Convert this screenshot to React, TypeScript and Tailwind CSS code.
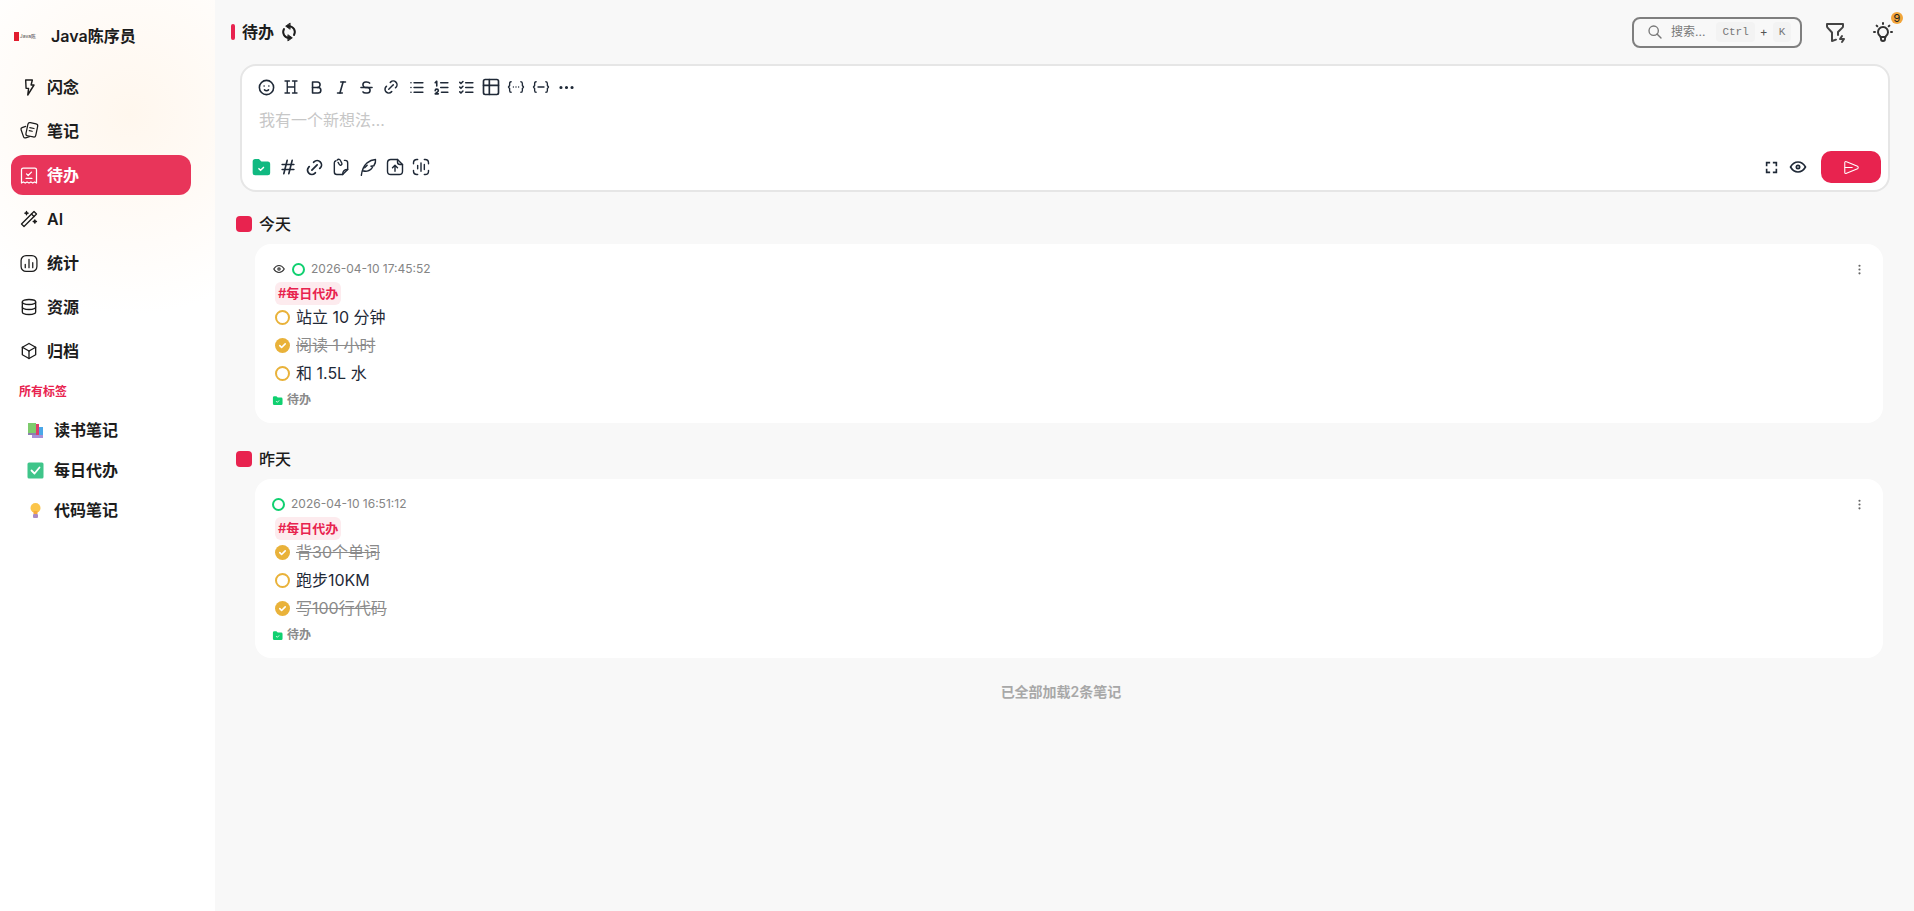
import type { ReactNode } from "react";
import {
  TbBold,
  TbBox,
  TbBulb,
  TbDatabase,
  TbDots,
  TbDotsVertical,
  TbEye,
  TbFilterBolt,
  TbHash,
  TbItalic,
  TbLink,
  TbList,
  TbListCheck,
  TbListNumbers,
  TbMoodSmile,
  TbSearch,
  TbStrikethrough,
  TbTable,
  TbWand,
} from "react-icons/tb";

const font = "font-['Inter','Noto_Sans_CJK_SC',sans-serif]";

const BoltIcon = () => (
  <svg width="21" height="21" viewBox="0 0 24 24" fill="none" stroke="currentColor" strokeWidth="1.700" strokeLinejoin="round" strokeLinecap="round">
    <path d="M8 3h8l-1.500 6H18l-7.500 12 1-8H8.500L8 3z" />
  </svg>
);

const NotesIcon = () => (
  <svg width="22" height="22" viewBox="0 0 24 24" fill="none" stroke="currentColor" strokeWidth="1.500" strokeLinejoin="round" strokeLinecap="round">
    <rect x="9.500" y="2.500" width="12" height="16" rx="2.500" transform="rotate(12 15 10)" />
    <path d="M13 8l5 1M12.300 11.500l3.500.8" />
    <path d="M8 6.500L3.700 8a2 2 0 0 0-1.200 2.500l3 8.500A2 2 0 0 0 8 20.200l4.500-1.400" />
  </svg>
);

const TodoIcon = () => (
  <svg width="21" height="21" viewBox="0 0 24 24" fill="none" stroke="currentColor" strokeWidth="1.500" strokeLinejoin="round" strokeLinecap="round">
    <path d="M5 3h14a2 2 0 0 1 2 2v16l-2.200-1.200-2.300 1.200-2.200-1.200-2.300 1.200-2.300-1.200L7.500 21l-2.300-1.200L3 21V5a2 2 0 0 1 2-2z" />
    <path d="M9 10l2 2 4-4M8.500 15.500h7" />
  </svg>
);

const ChartIcon = () => (
  <svg width="21" height="21" viewBox="0 0 24 24" fill="none" stroke="currentColor" strokeWidth="1.500" strokeLinecap="round">
    <rect x="2.500" y="2.500" width="19" height="19" rx="6" />
    <path d="M7.500 13v4M12 7v10M16.500 11v6" />
  </svg>
);

const SyncIcon = () => (
  <svg width="20" height="20" viewBox="0 0 24 24" fill="none" stroke="currentColor" strokeWidth="2.400" strokeLinecap="round" strokeLinejoin="round">
    <path d="M12 5a7 7 0 0 1 6 10.500" />
    <path d="M12 19a7 7 0 0 1-6-10.500" />
    <path d="M13 1.500L8 5l5 3.500z" fill="currentColor" strokeWidth="1" />
    <path d="M11 15.500l5 3.500-5 3.500z" fill="currentColor" strokeWidth="1" />
  </svg>
);

const HeadingIcon = () => (
  <svg width="18" height="18" viewBox="0 0 24 24" fill="none" stroke="currentColor" strokeWidth="1.800" strokeLinecap="round">
    <path d="M7 4v16M17 4v16M7 12h10M4 4h6M14 4h6M4 20h6M14 20h6" />
  </svg>
);

const BraceDotsIcon = () => (
  <svg width="18" height="18" viewBox="0 0 24 24" fill="none" stroke="currentColor" strokeWidth="1.800" strokeLinecap="round" strokeLinejoin="round">
    <path d="M5.500 5C4 5 3.500 6 3.500 7.500v2.500L2 12l1.500 2v2.500C3.500 18 4 19 5.500 19" />
    <path d="M18.500 5C20 5 20.500 6 20.500 7.500v2.500L22 12l-1.500 2v2.500C20.500 18 20 19 18.500 19" />
    <path d="M8.500 12h.01M12 12h.01M15.500 12h.01" />
  </svg>
);

const BraceDashIcon = () => (
  <svg width="18" height="18" viewBox="0 0 24 24" fill="none" stroke="currentColor" strokeWidth="1.800" strokeLinecap="round" strokeLinejoin="round">
    <path d="M5.500 5C4 5 3.500 6 3.500 7.500v2.500L2 12l1.500 2v2.500C3.500 18 4 19 5.500 19" />
    <path d="M18.500 5C20 5 20.500 6 20.500 7.500v2.500L22 12l-1.500 2v2.500C20.500 18 20 19 18.500 19" />
    <path d="M8 12h8" />
  </svg>
);

const FolderCheck = ({ size, color }: { size: number; color: string }) => (
  <svg width={size} height={size} viewBox="0 0 24 24">
    <path d="M2 5.500A3 3 0 0 1 5 2.500h4.500l3 3H20a3 3 0 0 1 3 3V19a3 3 0 0 1-3 3H5a3 3 0 0 1-3-3z" fill={color} />
    <path d="M9.500 14l2 2 3.500-3.500" fill="none" stroke="#fff" strokeWidth="1.800" strokeLinecap="round" strokeLinejoin="round" />
  </svg>
);

const ClipNoteIcon = () => (
  <svg width="20" height="20" viewBox="0 0 24 24" fill="none" stroke="currentColor" strokeWidth="1.700" strokeLinecap="round" strokeLinejoin="round">
    <path d="M6 4.500A2.500 2.500 0 0 0 4 7v11a3 3 0 0 0 3 3h7l6-6V7a3 3 0 0 0-3-3h-1" />
    <path d="M14 21c0-3 1-6 6-6" />
    <path d="M7.500 3.500c1.500-1.500 3.500-.5 4 1l1.500 3c.8 2-2 3.200-3 1.500L8.500 6.500" />
  </svg>
);

const FeatherIcon = () => (
  <svg width="20" height="20" viewBox="0 0 24 24" fill="none" stroke="currentColor" strokeWidth="1.700" strokeLinecap="round" strokeLinejoin="round">
    <path d="M4 22c.8-6 3-11.500 7-15 3-2.500 6-3.700 10-4 .5 3-.5 5.500-2 7.500l-3.500.5 2 1c-1.200 2.500-3.500 4.500-6.500 5-2 .3-3.700 0-5-.5" />
    <path d="M8 13l3-3" />
  </svg>
);

const UploadFileIcon = () => (
  <svg width="20" height="20" viewBox="0 0 24 24" fill="none" stroke="currentColor" strokeWidth="1.700" strokeLinecap="round" strokeLinejoin="round">
    <path d="M15 3H7a4 4 0 0 0-4 4v10a4 4 0 0 0 4 4h10a4 4 0 0 0 4-4V9z" />
    <path d="M15 3v3a3 3 0 0 0 3 3h3" />
    <path d="M12 17v-7M9 13l3-3 3 3" />
  </svg>
);

const VoiceIcon = () => (
  <svg width="20" height="20" viewBox="0 0 24 24" fill="none" stroke="currentColor" strokeWidth="1.700" strokeLinecap="round">
    <path d="M3 8V7a4 4 0 0 1 4-4h1M16 3h1a4 4 0 0 1 4 4v1M21 16v1a4 4 0 0 1-4 4h-1M8 21H7a4 4 0 0 1-4-4v-1" />
    <path d="M8 10v4M12 7v10M16 9v6" />
  </svg>
);

const FullscreenIcon = () => (
  <svg width="13" height="13" viewBox="0 0 24 24" fill="none" stroke="currentColor" strokeWidth="3" strokeLinecap="square">
    <path d="M3 8V3h5M16 3h5v5M21 16v5h-5M8 21H3v-5" />
  </svg>
);

const SendIcon = () => (
  <svg width="17" height="17" viewBox="0 0 24 24" fill="none" stroke="#fff" strokeWidth="1.500" strokeLinejoin="round" strokeLinecap="round">
    <path d="M4 3.500c-1 0-1.500.7-1.500 1.500v14c0 .8.500 1.500 1.500 1.500.3 0 .6-.1 1-.3l15.500-6.500c1.300-.6 1.300-2.800 0-3.400L5 3.800c-.4-.2-.7-.3-1-.3z" />
    <path d="M3 12h10" />
  </svg>
);

const BooksEmoji = () => (
  <svg width="17" height="17" viewBox="0 0 17 17">
    <rect x="1" y="1" width="8" height="10" fill="#7ecb6d" />
    <rect x="9" y="2" width="3" height="11" fill="#dd3c6a" />
    <rect x="12" y="5" width="4" height="8" fill="#4aa7e8" />
    <rect x="5" y="13" width="11" height="3" fill="#a78fd8" />
    <rect x="1" y="11" width="8" height="2" fill="#8d7fb0" />
  </svg>
);

const CheckEmoji = () => (
  <svg width="17" height="17" viewBox="0 0 17 17">
    <rect x="0.500" y="0.500" width="16" height="16" rx="1.500" fill="#3fc58a" />
    <path d="M4.500 8.500l3 3 5-6" fill="none" stroke="#fff" strokeWidth="1.800" strokeLinecap="round" strokeLinejoin="round" />
  </svg>
);

const BulbEmoji = () => (
  <svg width="17" height="17" viewBox="0 0 17 17">
    <circle cx="8.500" cy="6" r="5" fill="#fbc54a" />
    <path d="M6.500 9h4v3h-4z" fill="#f6a93a" />
    <rect x="6" y="12" width="5" height="4" rx="1" fill="#a98bc4" />
  </svg>
);

const navItems: { label: string; icon: ReactNode; active?: boolean }[] = [
  { label: "闪念", icon: <BoltIcon /> },
  { label: "笔记", icon: <NotesIcon /> },
  { label: "待办", icon: <TodoIcon />, active: true },
  { label: "AI", icon: <TbWand size={22} strokeWidth={1.6} /> },
  { label: "统计", icon: <ChartIcon /> },
  { label: "资源", icon: <TbDatabase size={22} strokeWidth={1.6} /> },
  { label: "归档", icon: <TbBox size={22} strokeWidth={1.6} /> },
];

const tagItems: { label: string; icon: ReactNode }[] = [
  { label: "读书笔记", icon: <BooksEmoji /> },
  { label: "每日代办", icon: <CheckEmoji /> },
  { label: "代码笔记", icon: <BulbEmoji /> },
];

const toolbarIcons: ReactNode[] = [
  <TbMoodSmile size={19} />,
  <HeadingIcon />,
  <TbBold size={19} />,
  <TbItalic size={19} />,
  <TbStrikethrough size={19} />,
  <TbLink size={18} />,
  <TbList size={19} />,
  <TbListNumbers size={19} />,
  <TbListCheck size={19} />,
  <TbTable size={20} />,
  <BraceDotsIcon />,
  <BraceDashIcon />,
  <TbDots size={19} />,
];

const composerIcons: ReactNode[] = [
  <FolderCheck size={20} color="#10b981" />,
  <TbHash size={20} />,
  <TbLink size={21} />,
  <ClipNoteIcon />,
  <FeatherIcon />,
  <UploadFileIcon />,
  <VoiceIcon />,
];

const Sidebar = () => (
  <aside className="w-[215px] h-full shrink-0 bg-white bg-[radial-gradient(circle_200px_at_130px_115px,#fff7ee_0%,#fffcf9_65%,#ffffff_100%)] flex flex-col">
    <div className="h-[67px] flex items-center pl-[14px] pt-[5px] shrink-0">
      <div className="w-[22px] h-[9px] flex items-center">
        <div className="w-[7px] h-[9px] bg-[#e11d2e]" />
        <span className="ml-[1px] text-[5px] leading-[9px] whitespace-nowrap text-[#444]">Java陈</span>
      </div>
      <span className="ml-[15px] text-base font-semibold text-[#1c1c1c]">Java陈序员</span>
    </div>
    <nav className="px-[11px] flex flex-col gap-1">
      {navItems.map((item) => (
        <div
          key={item.label}
          className={`h-10 w-[180px] rounded-xl flex items-center pl-[8px] gap-[8px] text-base font-semibold ${
            item.active ? "bg-[#e8355a] text-white" : "text-[#1c1c1c]"
          }`}
        >
          <span className="w-5 h-5 flex items-center justify-center">{item.icon}</span>
          <span>{item.label}</span>
        </div>
      ))}
    </nav>
    <p className="text-xs font-semibold text-[#e8234f] pl-[19px] mt-[11px] leading-5">所有标签</p>
    <div className="mt-[8px] flex flex-col">
      {tagItems.map((tag) => (
        <div key={tag.label} className="h-10 flex items-center pl-[27px] gap-[10px] text-base font-semibold text-[#1c1c1c]">
          {tag.icon}
          <span>{tag.label}</span>
        </div>
      ))}
    </div>
  </aside>
);

const Header = () => (
  <header className="h-[64px] shrink-0 flex items-center justify-between pl-[16px] pr-[19px]">
    <div className="flex items-center">
      <div className="w-1 h-4 bg-[#e8234f] rounded-sm" />
      <span className="ml-[7px] text-base font-semibold text-[#1c1c1c]">待办</span>
      <span className="ml-[5px] text-[#1c1c1c]">
        <SyncIcon />
      </span>
    </div>
    <div className="flex items-center">
      <div className="w-[170px] h-[31px] border-2 border-[#7f7f7f] rounded-lg flex items-center pl-[13px] text-[#777]">
        <TbSearch size={16} />
        <span className="ml-[8px] text-xs whitespace-nowrap">搜索...</span>
        <span className="ml-[11px] px-[6px] h-5 flex items-center bg-[#f3f3f3] rounded text-[11px] font-['Liberation_Mono',monospace]">Ctrl</span>
        <span className="mx-[5px] text-xs text-[#555]">+</span>
        <span className="px-[6px] h-5 flex items-center bg-[#f3f3f3] rounded text-[11px] font-['Liberation_Mono',monospace]">K</span>
      </div>
      <span className="ml-[21px] text-[#444]">
        <TbFilterBolt size={24} />
      </span>
      <span className="ml-[24px] relative text-[#333]">
        <TbBulb size={24} />
        <span className="absolute -top-[8px] -right-[8px] w-3 h-3 rounded-full bg-[#f2a53a] text-[11px] leading-3 text-center text-[#222]">9</span>
      </span>
    </div>
  </header>
);

const Editor = () => (
  <section className="ml-[25px] mr-[24px] h-[128px] shrink-0 bg-white border-2 border-[#e6e6e6] rounded-2xl flex flex-col pl-[6px] pr-[7px] text-[#1f2937]">
    <div className="h-[42px] flex items-center pl-[5.500px] shrink-0">
      {toolbarIcons.map((icon, i) => (
        <span key={i} className="w-[25px] flex items-center justify-center">
          {icon}
        </span>
      ))}
    </div>
    <div className="mt-[2px] pl-[11px] text-base leading-5 text-[#c7c7c7]">我有一个新想法…</div>
    <div className="mt-auto mb-[7px] flex items-center justify-between">
      <div className="flex items-center">
        {composerIcons.map((icon, i) => (
          <span key={i} className="w-[26.700px] flex items-center justify-center">
            {icon}
          </span>
        ))}
      </div>
      <div className="flex items-center">
        <FullscreenIcon />
        <span className="ml-[10px]">
          <TbEye size={20} />
        </span>
        <button className="ml-[13px] w-[60px] h-[32px] bg-[#e8234f] rounded-[10px] flex items-center justify-center">
          <SendIcon />
        </button>
      </div>
    </div>
  </section>
);

const TodoLine = ({ text, done }: { text: string; done?: boolean }) => (
  <div className="h-7 flex items-center pl-[3px]">
    {done ? (
      <span className="w-[15px] h-[15px] rounded-full bg-[#e9b23a] flex items-center justify-center">
        <svg width="9" height="9" viewBox="0 0 10 10" fill="none" stroke="#fff" strokeWidth="1.800" strokeLinecap="round" strokeLinejoin="round">
          <path d="M2 5.200l2 2 4-4" />
        </svg>
      </span>
    ) : (
      <span className="w-[15px] h-[15px] rounded-full border-2 border-[#e9b23a]" />
    )}
    <span className={`ml-[6px] text-base ${done ? "text-[#8a8a8a] line-through" : "text-[#1f2937]"}`}>{text}</span>
  </div>
);

type Todo = { text: string; done?: boolean };

const TodoCard = ({ time, showEye, todos }: { time: string; showEye?: boolean; todos: Todo[] }) => (
  <article className="ml-[40px] mr-[31px] h-[179px] bg-white rounded-2xl pl-[17px] pr-[17px] pt-[13px] flex flex-col">
    <div className="h-[24px] flex items-center shrink-0">
      {showEye && (
        <span className="mr-[6px] text-[#333]">
          <TbEye size={14} />
        </span>
      )}
      <span className="w-[13px] h-[13px] rounded-full border-2 border-[#10d070]" />
      <span className="ml-[6px] text-xs text-[#858585]">{time}</span>
      <span className="ml-auto text-[#666]">
        <TbDotsVertical size={13} />
      </span>
    </div>
    <div className="h-[23px] mt-[1px] shrink-0 ml-[3px] self-start px-[3px] rounded-md bg-[#fdebee] text-[13px] font-semibold leading-[23px] text-[#e8234f]">
      #每日代办
    </div>
    <div className="-mt-[2px] flex flex-col">
      {todos.map((todo) => (
        <TodoLine key={todo.text} text={todo.text} done={todo.done} />
      ))}
    </div>
    <div className="mt-[3px] h-5 flex items-center gap-[4px] text-xs font-semibold text-[#8a8a8a]">
      <FolderCheck size={11} color="#10d070" />
      <span>待办</span>
    </div>
  </article>
);

const DayTitle = ({ title }: { title: string }) => (
  <div className="h-[20px] flex items-center pl-[21px] text-base font-medium text-[#1c1c1c]">
    <span className="w-4 h-4 rounded bg-[#e8234f]" />
    <span className="ml-[7px]">{title}</span>
  </div>
);

export default function App() {
  return (
    <div className={`${font} w-full h-screen overflow-hidden flex bg-[#f8f8f8]`}>
      <Sidebar />
      <main className="flex-1 h-full flex flex-col">
        <Header />
        <Editor />
        <div className="mt-[22px]">
          <DayTitle title="今天" />
        </div>
        <div className="mt-[10px]">
          <TodoCard
            time="2026-04-10 17:45:52"
            showEye
            todos={[
              { text: "站立 10 分钟" },
              { text: "阅读 1 小时", done: true },
              { text: "和 1.5L 水" },
            ]}
          />
        </div>
        <div className="mt-[26px]">
          <DayTitle title="昨天" />
        </div>
        <div className="mt-[10px]">
          <TodoCard
            time="2026-04-10 16:51:12"
            todos={[
              { text: "背30个单词", done: true },
              { text: "跑步10KM" },
              { text: "写100行代码", done: true },
            ]}
          />
        </div>
        <p className="mt-[24px] text-center text-sm font-semibold text-[#a8a8a8] mr-[18px] ml-[11px]">已全部加载2条笔记</p>
      </main>
    </div>
  );
}
